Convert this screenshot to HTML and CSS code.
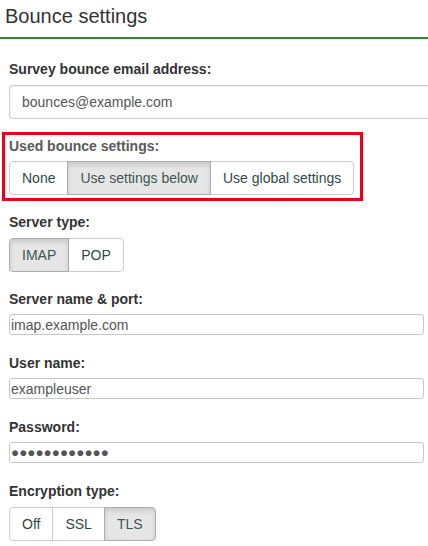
FILE: index.html
```html
<!DOCTYPE html>
<html lang="en">
<head>
<meta charset="utf-8">
<title>Bounce settings</title>
<link rel="stylesheet" href="styles.css">
</head>
<body>
<h3 class="page-title">Bounce settings</h3>
<form class="settings-form">
  <div class="group group-email">
    <label class="field-label" for="bounce-email">Survey bounce email address:</label>
    <input class="input-large" id="bounce-email" type="text" value="bounces@example.com">
  </div>

  <div class="group group-highlight">
    <label class="field-label muted">Used bounce settings:</label>
    <div class="btn-group">
      <button type="button" class="btn">None</button>
      <button type="button" class="btn active">Use settings below</button>
      <button type="button" class="btn">Use global settings</button>
    </div>
  </div>

  <div class="group group-server-type">
    <label class="field-label">Server type:</label>
    <div class="btn-group">
      <button type="button" class="btn active">IMAP</button>
      <button type="button" class="btn">POP</button>
    </div>
  </div>

  <div class="group">
    <label class="field-label" for="server">Server name &amp; port:</label>
    <input class="input-small" id="server" type="text" value="imap.example.com">
  </div>

  <div class="group">
    <label class="field-label" for="user">User name:</label>
    <input class="input-small" id="user" type="text" value="exampleuser">
  </div>

  <div class="group">
    <label class="field-label" for="pass">Password:</label>
    <input class="input-small input-pass" id="pass" type="text" value="●●●●●●●●●●●●">
  </div>

  <div class="group group-last">
    <label class="field-label">Encryption type:</label>
    <div class="btn-group">
      <button type="button" class="btn">Off</button>
      <button type="button" class="btn">SSL</button>
      <button type="button" class="btn active">TLS</button>
    </div>
  </div>
</form>
</body>
</html>
```
FILE: styles.css
```css
* {
  box-sizing: border-box;
}

html, body {
  overflow: hidden;
}

body {
  margin: 0;
  font-family: "Liberation Sans", Arial, Helvetica, sans-serif;
  font-size: 14px;
  line-height: 20px;
  color: #333;
  background: #fff;
}

.page-title {
  margin: 0;
  padding: 5px 5px 10px;
  font-size: 20px;
  line-height: 22px;
  font-weight: normal;
  color: #333;
  border-bottom: 2px solid #328637;
}

.settings-form {
  padding: 20px 4px 0 9px;
}

.group {
  margin-bottom: 18px;
}

.group-email {
  margin-bottom: 13px;
}

.group-highlight {
  margin-left: -7px;
  width: 361px;
  border: 3px solid #e8001c;
  padding: 1px 4px 3px 4px;
  margin-bottom: 11px;
}

.group-server-type {
  margin-bottom: 17px;
}

.group-last {
  margin-bottom: 0;
}

.field-label {
  display: block;
  font-weight: bold;
  line-height: 20px;
  margin-bottom: 5px;
  color: #333;
}

.group-email .field-label,
.group-server-type .field-label,
.group-last .field-label {
  margin-bottom: 6px;
}

.field-label.muted {
  color: #5a5a5a;
}

/* the wide field runs on past the right edge of the panel */
.input-large {
  display: block;
  width: calc(100% + 4px);
  height: 34px;
  padding: 6px 12px;
  font-family: inherit;
  font-size: 14px;
  line-height: 20px;
  color: #555;
  background: #fff;
  border: 1px solid #ccc;
  border-right: none;
  border-radius: 4px 0 0 4px;
  box-shadow: inset 0 1px 1px rgba(0, 0, 0, 0.075);
  margin: 0;
}

.input-small {
  display: block;
  width: 100%;
  height: 21px;
  padding: 0 1px;
  font-family: inherit;
  font-size: 14px;
  line-height: 19px;
  color: #555;
  background: #fff;
  border: 1px solid #c8c8c8;
  border-radius: 3px;
  margin: 0;
}

.input-pass {
  font-size: 13.5px;
  color: #555;
}

.btn-group {
  display: inline-flex;
}

.btn {
  position: relative;
  margin: 0;
  padding: 6px 12px;
  font-family: inherit;
  font-size: 14px;
  line-height: 20px;
  color: #2e4a45;
  background: #fff;
  border: 1px solid #ccc;
  border-radius: 0;
  cursor: pointer;
}

.btn + .btn {
  margin-left: -1px;
}

.btn:first-child {
  border-radius: 4px 0 0 4px;
}

.btn:last-child {
  border-radius: 0 4px 4px 0;
}

.btn.active {
  z-index: 1;
  background: #e6e6e6;
  border-color: #adadad;
  box-shadow: inset 0 3px 5px rgba(0, 0, 0, 0.125);
  color: #3e5654;
}
```
